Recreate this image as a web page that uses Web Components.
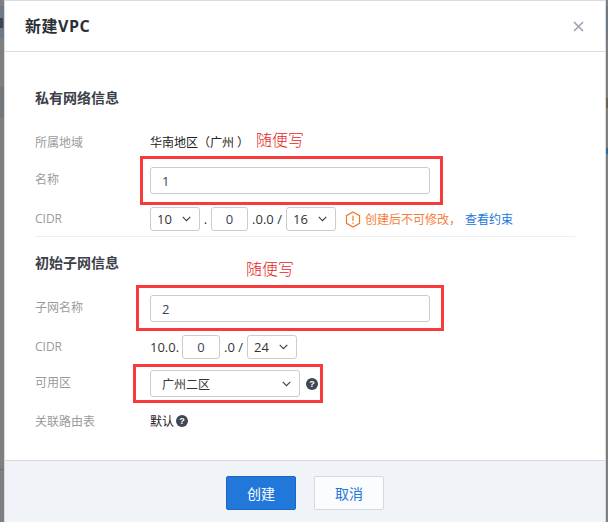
<!DOCTYPE html>
<html lang="zh">
<head>
<meta charset="utf-8">
<title>新建VPC</title>
<style>
  html, body { margin: 0; height: 100%; overflow: hidden; }
  body {
    font-family: "Open Sans", "Noto Sans CJK SC", sans-serif;
    font-size: 12px;
    color: #222;
  }
  .first { margin-top: 24px; }
  .name { margin-top: 15px; }
  .cidr { margin-top: 13px; }
  .subnet { margin-top: 22px; }
  .zone { margin-top: 11px; }
  .route { margin-top: 14px; }
  .rule { margin-top: 5px; height: 1px; background: #eceef0; }
  .second { margin-top: 16px; }
  .inline { display: flex; align-items: center; }
  .num { font-size: 13px; color: #333; white-space: pre; }
</style>
</head>
<body>
<vpc-backdrop>
  <vpc-dialog>
    <span slot="title">新建VPC</span>

    <vpc-heading>私有网络信息</vpc-heading>
    <vpc-row class="first" label="所属地域" height="20">华南地区（广州<span style="margin-left:3px">）</span></vpc-row>
    <vpc-row class="name" label="名称" height="27"><vpc-input style="width:280px">1</vpc-input></vpc-row>
    <vpc-row class="cidr" label="CIDR" height="24">
      <div class="inline">
        <vpc-select style="width:50px">10</vpc-select>
        <span class="num" style="width:11px;text-align:center">.</span>
        <vpc-input small style="width:37px">0</vpc-input>
        <span class="num" style="width:38px;text-align:center">.0.0 /</span>
        <vpc-select style="width:50px">16</vpc-select>
        <vpc-note>创建后不可修改，<a slot="link">查看约束</a></vpc-note>
      </div>
    </vpc-row>
    <div class="rule"></div>

    <vpc-heading class="second">初始子网信息</vpc-heading>
    <vpc-row class="subnet" label="子网名称" height="27"><vpc-input style="width:280px">2</vpc-input></vpc-row>
    <vpc-row class="cidr" label="CIDR" height="24">
      <div class="inline">
        <span class="num" style="width:32px">10.0.</span>
        <vpc-input small style="width:38px">0</vpc-input>
        <span class="num" style="width:27px;text-align:center">.0 /</span>
        <vpc-select style="width:50px">24</vpc-select>
      </div>
    </vpc-row>
    <vpc-row class="zone" label="可用区" height="27">
      <div class="inline">
        <vpc-select wide style="width:150px">广州二区</vpc-select>
        <vpc-help style="margin-left:6px"></vpc-help>
      </div>
    </vpc-row>
    <vpc-row class="route" label="关联路由表" height="20">
      <div class="inline">默认<vpc-help style="margin-left:2px"></vpc-help></div>
    </vpc-row>

    <vpc-button slot="footer" primary>创建</vpc-button>
    <vpc-button slot="footer">取消</vpc-button>
  </vpc-dialog>

  <!-- red annotations drawn over the dialog -->
  <vpc-mark style="left:140px;top:156px;width:303px;height:49px"></vpc-mark>
  <vpc-mark style="left:136px;top:285px;width:308px;height:46px"></vpc-mark>
  <vpc-mark style="left:133px;top:364px;width:190px;height:39px"></vpc-mark>
  <vpc-scrawl style="left:256px;top:128px">随便写</vpc-scrawl>
  <vpc-scrawl style="left:246px;top:257px">随便写</vpc-scrawl>
</vpc-backdrop>

<script>
class VpcBackdrop extends HTMLElement {
  constructor() {
    super();
    this.attachShadow({ mode: 'open' });
    this.shadowRoot.innerHTML = `
      <style>
        :host {
          display: block;
          position: relative;
          height: 522px;
          padding: 0 2px 0 4px;
          box-sizing: border-box;
          background-color: #7f7f7f;
          /* the page behind the overlay only shows as two thin strips */
          background-image:
            linear-gradient(#3c4650, #3c4650),
            linear-gradient(#7f7f7f 6px, #6f7a85 6px, #6f7a85 39px, #7f7f7f 39px, #7f7f7f 87px, #73777a 87px, #73777a 118px, #7f7f7f 118px, #7f7f7f 469px, #6e6e6e 469px, #6e6e6e 470px, #7f7f7f 470px),
            linear-gradient(#7f7f7f 6px, #6f7a85 6px, #6f7a85 39px, #7f7f7f 39px, #7f7f7f 98px, #6f6250 98px, #6f6250 108px, #7f7f7f 108px, #7f7f7f 148px, #2f6a9c 148px, #2f6a9c 154px, #7f7f7f 154px);
          background-size: 3px 10px, 4px 100%, 2px 100%;
          background-position: 0 18px, 0 0, right 0 top 0;
          background-repeat: no-repeat;
        }
      </style>
      <slot></slot>
    `;
  }
}

class VpcDialog extends HTMLElement {
  constructor() {
    super();
    this.attachShadow({ mode: 'open' });
    this.shadowRoot.innerHTML = `
      <style>
        :host {
          display: flex;
          flex-direction: column;
          height: 100%;
          box-sizing: border-box;
          background: #fff;
          border: 1px solid #d8dadd;
          border-bottom: 0;
        }
        header {
          display: flex;
          align-items: center;
          justify-content: space-between;
          height: 50px;
          padding: 0 21px 0 20px;
          border-bottom: 1px solid #dcdcdc;
          box-sizing: content-box;
        }
        .title {
          font-size: 16px;
          font-weight: 700;
          letter-spacing: .5px;
          color: #2b2f36;
          position: relative;
          top: -1px;
        }
        svg { display: block; }
        main {
          flex: 1;
          padding: 36px 30px 0;
        }
        footer {
          display: flex;
          gap: 18px;
          justify-content: center;
          padding: 15px 0 12px 0;
          background: #f0f3f7;
          border-top: 1px solid #d8dadd;
        }
      </style>
      <header>
        <div class="title"><slot name="title"></slot></div>
        <svg width="11" height="11" viewBox="0 0 11 11" fill="none" stroke="#98a2ad" stroke-width="1.5">
          <path d="M1 1l9 9M10 1l-9 9"/>
        </svg>
      </header>
      <main><slot></slot></main>
      <footer><slot name="footer"></slot></footer>
    `;
  }
}

class VpcHeading extends HTMLElement {
  constructor() {
    super();
    this.attachShadow({ mode: 'open' });
    this.shadowRoot.innerHTML = `
      <style>
        :host {
          display: block;
          height: 20px;
          line-height: 20px;
          font-size: 14px;
          font-weight: 700;
          color: #3c4048;
        }
      </style>
      <slot></slot>
    `;
  }
}

class VpcRow extends HTMLElement {
  constructor() {
    super();
    this.attachShadow({ mode: 'open' });
    this.shadowRoot.innerHTML = `
      <style>
        :host {
          display: grid;
          grid-template-columns: 115px 1fr;
          align-items: center;
          font-size: 12px;
          color: #222;
        }
        .label { color: #9b9b9b; }
        :host([height="27"]) .label { padding-bottom: 3px; }
        :host([height="24"]) .label { padding-bottom: 2px; }
      </style>
      <div class="label"></div>
      <div><slot></slot></div>
    `;
  }

  connectedCallback() {
    this.shadowRoot.querySelector('.label').textContent = this.getAttribute('label');
    this.style.height = this.getAttribute('height') + 'px';
  }
}

class VpcInput extends HTMLElement {
  constructor() {
    super();
    this.attachShadow({ mode: 'open' });
    this.shadowRoot.innerHTML = `
      <style>
        :host {
          display: flex;
          align-items: center;
          box-sizing: border-box;
          height: 27px;
          padding: 0 11px;
          border: 1px solid #ccc;
          border-radius: 3px;
          background: #fff;
          font-size: 13px;
          color: #3b3f58;
        }
        :host([small]) {
          height: 24px;
          padding: 0;
          justify-content: center;
        }
      </style>
      <slot></slot>
    `;
  }
}

class VpcSelect extends HTMLElement {
  constructor() {
    super();
    this.attachShadow({ mode: 'open' });
    this.shadowRoot.innerHTML = `
      <style>
        :host {
          display: flex;
          align-items: center;
          justify-content: space-between;
          box-sizing: border-box;
          height: 24px;
          padding: 0 8px 0 6px;
          border: 1px solid #ccc;
          border-radius: 3px;
          background: #fff;
          font-size: 13px;
          color: #333;
        }
        :host([wide]) {
          height: 27px;
          padding-left: 11px;
          font-size: 12px;
        }
        svg { display: block; flex: none; }
      </style>
      <span><slot></slot></span>
      <svg width="9" height="6" viewBox="0 0 9 6" fill="none" stroke="#444" stroke-width="1.2">
        <path d="M.7.8l3.8 3.800L8.300.8"/>
      </svg>
    `;
  }
}

class VpcHelp extends HTMLElement {
  constructor() {
    super();
    this.attachShadow({ mode: 'open' });
    this.shadowRoot.innerHTML = `
      <style>
        :host {
          display: inline-flex;
          align-items: center;
          justify-content: center;
          width: 12px;
          height: 12px;
          border-radius: 50%;
          background: #3f4755;
          color: #fff;
          font: 700 9px/12px "Liberation Sans", sans-serif;
        }
      </style>
      ?
    `;
  }
}

class VpcNote extends HTMLElement {
  constructor() {
    super();
    this.attachShadow({ mode: 'open' });
    this.shadowRoot.innerHTML = `
      <style>
        :host {
          display: flex;
          align-items: center;
          margin-left: 9px;
          font-size: 12px;
          color: #f5803e;
          white-space: nowrap;
        }
        svg { display: block; margin-right: 4px; }
        .link { margin-left: 4px; color: #2277da; }
      </style>
      <svg width="16" height="17" viewBox="0 0 16 17" fill="none" stroke="#f0782e" stroke-width="1.2">
        <path d="M8 1l6.500 3.700v7.600L8 16l-6.500-3.700V4.700z"/>
        <path d="M8 4.800v5.200M8 11.300v1.500"/>
      </svg>
      <slot></slot>
      <span class="link"><slot name="link"></slot></span>
    `;
  }
}

class VpcButton extends HTMLElement {
  constructor() {
    super();
    this.attachShadow({ mode: 'open' });
    this.shadowRoot.innerHTML = `
      <style>
        :host {
          display: flex;
          align-items: center;
          justify-content: center;
          box-sizing: border-box;
          width: 70px;
          height: 34px;
          border: 1px solid #d5d8dc;
          border-radius: 2px;
          background: #fbfcfd;
          color: #2277da;
          font-size: 14px;
        }
        :host([primary]) {
          border-color: #1b67bf;
          background: #2277da;
          color: #fff;
        }
      </style>
      <slot></slot>
    `;
  }
}

class VpcMark extends HTMLElement {
  constructor() {
    super();
    this.attachShadow({ mode: 'open' });
    this.shadowRoot.innerHTML = `
      <style>
        :host {
          position: absolute;
          box-sizing: border-box;
          border: 3px solid #f93a3a;
        }
      </style>
    `;
  }
}

class VpcScrawl extends HTMLElement {
  constructor() {
    super();
    this.attachShadow({ mode: 'open' });
    this.shadowRoot.innerHTML = `
      <style>
        :host {
          position: absolute;
          font-size: 16px;
          line-height: 24px;
          font-weight: 300;
          color: #e81c1c;
        }
      </style>
      <slot></slot>
    `;
  }
}

customElements.define('vpc-backdrop', VpcBackdrop);
customElements.define('vpc-dialog', VpcDialog);
customElements.define('vpc-heading', VpcHeading);
customElements.define('vpc-row', VpcRow);
customElements.define('vpc-input', VpcInput);
customElements.define('vpc-select', VpcSelect);
customElements.define('vpc-help', VpcHelp);
customElements.define('vpc-note', VpcNote);
customElements.define('vpc-button', VpcButton);
customElements.define('vpc-mark', VpcMark);
customElements.define('vpc-scrawl', VpcScrawl);
</script>
</body>
</html>
